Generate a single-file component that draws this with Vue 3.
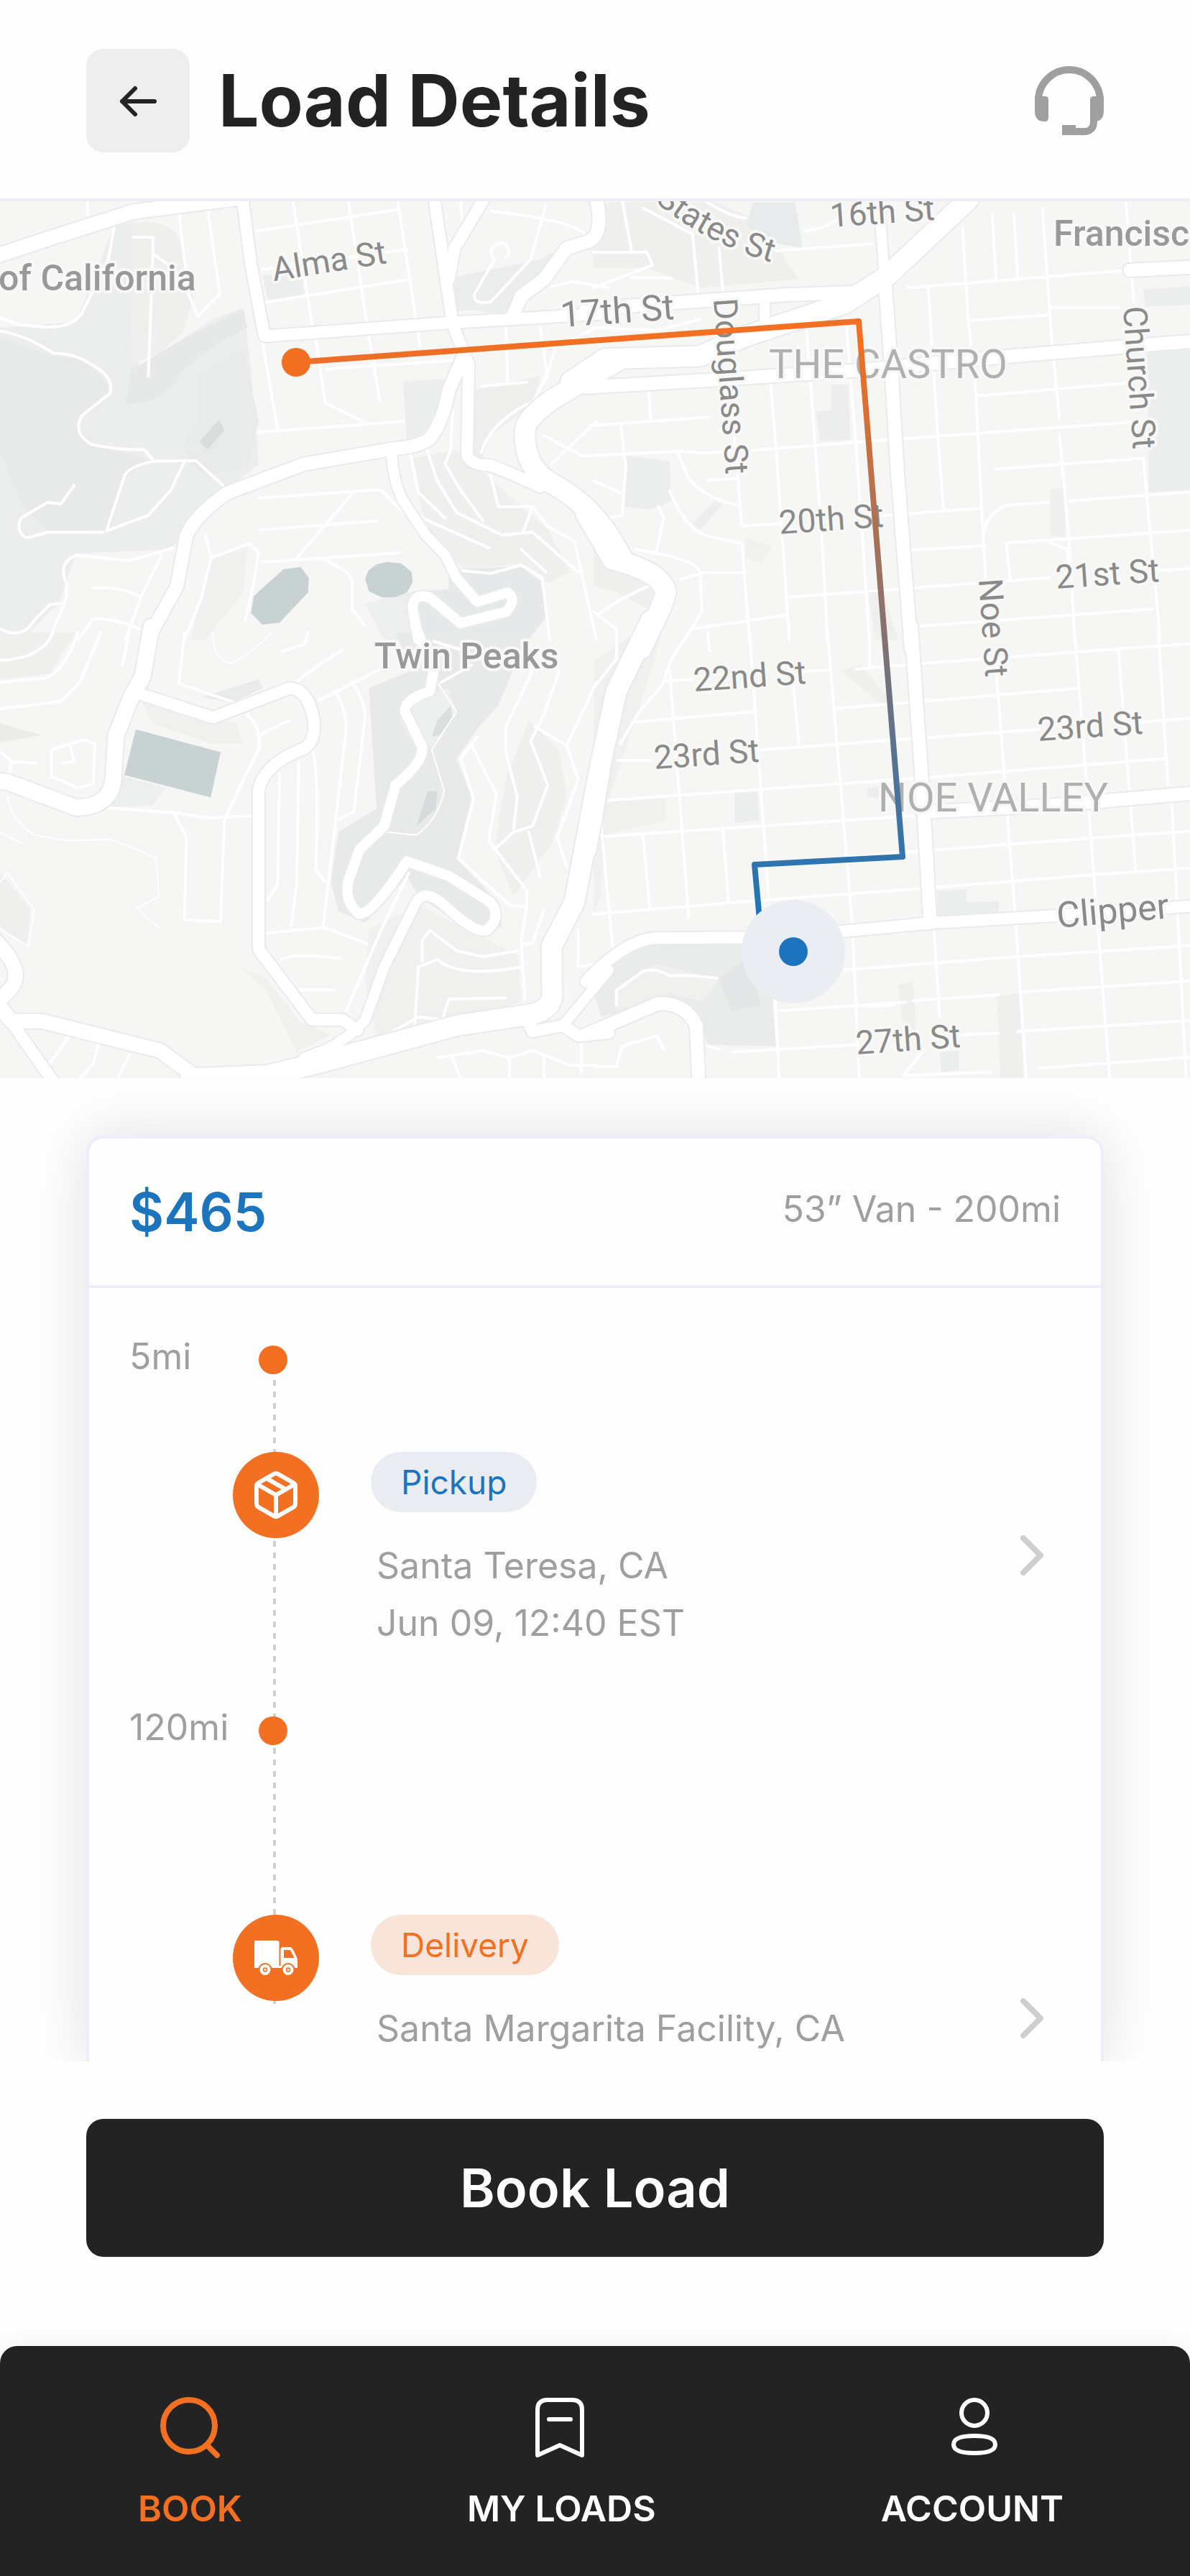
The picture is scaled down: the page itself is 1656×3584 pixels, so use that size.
<script setup>
const tiles = [
  {
    id: 'nw', x: 0, y: -10, height: 620,
    areas: [
      { c: '#ebeeed', d: 'M0 470L200 450L300 110L350 100L345 560L390 640L480 510L560 440L640 400L660 620L680 950L520 1120L450 1250L200 1265L155 1440L60 1568H0Z' },
      { c: '#e7eae9', d: 'M0 500Q80 560 200 580Q290 640 285 700L205 800Q210 870 300 900L400 940L320 1000L290 1180L130 1190L60 1100L0 900Z' },
      { c: '#e6e9e8', d: 'M345 620L480 510L640 405L650 470Q520 560 470 640Q430 740 330 740Z' },
      { c: '#e8ebea', d: 'M520 640L640 540L680 800L650 960L540 990Q440 900 520 800Z' },
      { c: '#dadddc', d: 'M525 870L575 795L590 830L545 900Z' },
      { c: '#efefed', d: 'M350 100Q440 90 470 150L510 370L480 490L420 560L345 600Z' },
      { c: '#ebeeed', d: 'M690 285L795 275L800 365L705 375Z' },
      { c: '#ebeeed', d: 'M1060 660L1180 650L1150 800L1070 880Z' },
      { c: '#ebedec', d: 'M1170 300L1420 230L1510 170L1440 300L1370 400L1300 420Q1230 400 1180 420Z' },
      { c: '#eeeeec', d: 'M1250 690L1420 640L1400 740L1290 850L1260 950L1240 900Z' },
      { c: '#efefed', d: 'M1080 930L1200 900L1330 1050L1440 1180L1500 1330L1440 1370L1370 1300L1220 1320L1120 1180Z' },
      { c: '#e6e9e9', d: 'M1180 1320L1370 1310L1430 1370L1440 1480L1390 1568H1110L1080 1400L1180 1390Z' },
      { c: '#ecefee', d: 'M960 1440L1080 1400L1100 1568H1010Z' },
      { c: '#f0f0ee', d: 'M560 1280L650 1240L640 1400L540 1568H500Z' },
      { c: '#c9d2d3', d: 'M745 1320L790 1312L812 1350L810 1402L735 1508L690 1515L660 1475L667 1415Z' },
      { c: '#c9d2d3', d: 'M990 1303L1020 1294L1055 1300L1082 1330L1085 1365L1070 1402L1040 1418L1005 1420L970 1398L960 1355L968 1325Z' },
    ],
    majors: [
      { w: 20, d: 'M-20 222L120 160L350 62L640 12' },
      { w: 16, d: 'M636 0L660 250L695 500L1190 452L1600 420' },
      { w: 16, d: 'M1140 0L1165 230L1190 458L1232 600L1228 920Q1240 955 1290 955Q1340 980 1420 1030' },
      { w: 16, d: 'M1280 0L1195 190L1180 300' },
      { w: 18, d: 'M1568 20Q1590 150 1540 170L1490 190L1430 300L1370 360L1350 425' },
      { w: 18, d: 'M1222 560L1180 690Q1165 800 1130 860Q1100 890 1040 895L800 950L600 1050Q520 1120 490 1200L465 1380L388 1568' },
      { w: 14, d: 'M1030 900Q1030 1000 1060 1080L1120 1200L1170 1270L1200 1350L1255 1435L1335 1402Q1360 1430 1330 1470L1210 1510L1130 1420Q1085 1400 1085 1460L1100 1568' },
      { w: 28, d: 'M1620 590L1480 700Q1390 770 1380 830Q1375 950 1440 1010Q1540 1080 1600 1200L1640 1290' },
    ],
    minors: [
      'M470 60L495 350L520 430L578 350L545 50', 'M350 152H402V210L455 260', 'M402 210L390 640',
      'M300 115L285 230L215 420Q190 470 120 468L50 460L-10 430', 'M230 30V80',
      'M-10 480Q60 490 140 560Q200 560 240 600Q300 640 290 700L215 780Q190 840 240 880Q300 900 380 900L405 940',
      'M405 940L515 938L590 1030', 'M405 940Q330 960 325 1000L280 1185L390 1130L450 1040L485 940',
      'M195 1025L160 1090L125 1085L55 1140Q40 1190 70 1210L125 1190H270',
      'M675 130L1045 55', 'M770 20L820 460', 'M915 20L965 460', 'M1045 20L1105 540', 'M690 265L1070 195', 'M700 380L1080 300',
      'M860 615L1200 585', 'M690 520L730 830', 'M680 838L1060 800', 'M830 510L855 735L955 800', 'M970 500L998 725',
      'M680 1070L1000 1040L1060 1120', 'M685 1182L990 1150', 'M930 1050L780 1280', 'M690 1295L1050 1262',
      'M850 1285Q925 1330 925 1360V1460L960 1520', 'M540 1200L555 1280L530 1420L485 1568',
      'M555 1280L655 1230L680 1260L665 1380L645 1500', 'M455 1245L340 1290L200 1270Q150 1300 175 1370V1420L130 1568',
      'M425 1270L370 1420L330 1568', 'M245 1385Q320 1380 365 1415', 'M205 1568L245 1495Q300 1490 365 1530', 'M0 1530Q60 1570 90 1500L130 1445L160 1440',
      'M1080 920L1100 1050L1170 1140', 'M1120 890L1150 1010L1200 1120L1320 1200L1400 1190L1520 1330',
      'M1190 760L1185 900L1170 950L1215 1050L1270 1150', 'M1110 1140L1285 1245',
      'M1290 990L1310 1100L1400 1100L1440 1170L1510 1220L1540 1400L1568 1568', 'M1400 1100L1375 1190',
      'M1215 1325L1290 1335L1370 1305L1425 1350L1445 1568', 'M1370 1250L1435 1330',
      'M1290 60Q1500 90 1545 145', 'M1435 40L1395 230L1290 380Q1240 390 1248 350L1300 230Q1275 190 1318 170Q1350 190 1330 225',
      'M1460 540Q1440 650 1400 730Q1290 800 1265 910', 'M1270 675L1385 662', 'M1330 470L1335 660', 'M1420 470L1440 650', 'M1460 540L1568 470',
      'M1430 850L1530 920H1568', 'M1450 950L1568 800', 'M1450 325L1510 308L1600 330', 'M1210 30L1215 90',
    ],
  },
  {
    id: 'ne', x: 826, y: -10, height: 620,
    areas: [
      { c: '#efefed', d: 'M0 30H330L440 100L540 300L280 330L140 260H0Z' },
      { c: '#e8ebeb', d: 'M420 30H530L550 190L470 170L400 110Z' },
      { c: '#eceeed', d: 'M80 920L200 940L205 1080L150 1110L80 1100Z' },
      { c: '#eceeed', d: 'M625 670H670L675 865L595 870L585 765L625 760Z' },
      { c: '#eceeed', d: 'M1455 550L1568 540V1040L1460 1050Z' },
      { c: '#eceeed', d: 'M1445 335L1568 325V390L1450 395Z' },
      { c: '#efefed', d: 'M1200 1040L1240 1030V1210L1200 1200Z' },
      { c: '#eceeed', d: 'M260 1160L320 1080L340 1090L280 1180Z' },
      { c: '#efefed', d: 'M0 1200L90 1300L170 1340V1480L60 1400L0 1380Z' },
      { c: '#efefed', d: 'M720 1390L760 1390L800 1568H740Z' },
      { c: '#f0f0ee', d: 'M400 1210L470 1240L440 1300L400 1280Z' },
    ],
    majors: [
      { w: 18, d: 'M-20 405L500 355L700 345' },
      { w: 14, d: 'M450 370V450' },
      { w: 18, d: 'M-20 680L300 655L700 620L1100 570L1600 515' },
      { w: 28, d: 'M-60 660L30 580L280 570L400 500L660 385L770 290L985 20' },
      { w: 14, d: 'M750 20L765 290' },
      { w: 18, d: 'M765 290L780 560L800 1000L835 1600' },
      { w: 18, d: 'M1410 268L1600 255' },
      { w: 28, d: 'M-20 1125L50 1285Q180 1330 190 1400Q185 1440 150 1530L125 1600' },
    ],
    minors: [
      'M970 120L985 440L1005 700L1020 1100L1040 1568', 'M880 330L905 850L920 1110', 'M1180 50L1205 520L1225 790', 'M1400 30L1420 380',
      'M1445 930L1490 1568', 'M1225 850L1250 1220L1265 1568', 'M560 480L600 1200L615 1568', 'M665 470L690 880L725 1568', 'M465 660L480 900L515 1568',
      'M370 860L390 1168L490 1160', 'M825 330L1390 270', 'M990 445L1200 425', 'M1205 400H1380', 'M1010 710L1400 665',
      'M-10 920L230 905L290 912L480 895L770 865L1440 800', 'M1055 968L1440 930', 'M1250 1080L1600 1045', 'M760 1132L1020 1105', 'M1085 1228L1600 1180',
      'M840 1252L1030 1238', 'M515 1418L800 1390L1200 1350', 'M1480 1325L1600 1315', 'M860 1520L1470 1460', 'M-10 815L300 785',
      'M1030 1180Q1030 1130 1085 1095L1195 1085', 'M1085 1230L1095 1350', 'M72 815L85 960L75 1130L40 1140', 'M145 700L150 790',
      'M220 905Q250 1000 250 1000Q290 1070 380 1095', 'M200 1045Q240 1170 290 1200L390 1230L410 1568', 'M300 1008L380 1000',
      'M110 1250L170 1265Q270 1290 280 1330L285 1470L240 1568', 'M230 1355L290 1332H400', 'M10 1480L80 1420L150 1375', 'M260 1530L510 1480',
      'M1048 70L1058 300', 'M1105 70L1115 290', 'M75 20L100 200', 'M0 205H140L155 250L0 330', 'M130 50L260 140L275 350', 'M330 190L340 350',
      'M480 200L730 175', 'M100 295H205', 'M555 130Q610 120 640 90', 'M300 30Q360 80 400 85', 'M170 1100L185 1140L165 1260', 'M0 1010L70 1050',
      'M1200 1225L1245 1250L1250 1300', 'M0 470L170 480L280 440', 'M0 1470L60 1530V1568',
    ],
  },
  {
    id: 'sw', x: 0, y: 600, height: 640,
    areas: [
      { c: '#efefed', d: 'M0 0H200L130 140L0 160Z' },
      { c: '#ebebe9', d: 'M0 310L110 350L0 375Z' },
      { c: '#e8eaea', d: 'M1040 0H1390L1310 250L1260 320L1200 430L1240 560L1200 770L1310 920L1320 1000L1270 1040L1170 960L1100 900L1070 830L960 990L890 950L870 850L890 680L990 600L980 400L970 190L1080 130Z' },
      { c: '#eef0ef', d: 'M1060 220L1180 190L1200 270L1130 400L1110 430L1050 300Z' },
      { c: '#dcdfdf', d: 'M1135 355L1150 300L1185 250L1190 300L1155 350Z' },
      { c: '#d8dbdb', d: 'M1095 660L1125 540H1150L1145 600Z' },
      { c: '#ecefee', d: 'M320 490L435 530L400 590L285 595Z' },
      { c: '#e9ebea', d: 'M530 220L680 160L690 190L610 240Z' },
      { c: '#f0f0ee', d: 'M370 230L620 310L640 380L560 380L400 310Z' },
      { c: '#f0f0ee', d: 'M630 1140L700 1180L790 1330L870 1370L780 1430L750 1350L700 1220Z' },
      { c: '#efefed', d: 'M1390 300L1470 400L1490 560L1450 720L1350 900L1300 740L1330 500Z' },
      { c: '#f0f0ee', d: 'M970 1010L1100 930L1360 1100L1370 1260L1200 1330L990 1380L960 1200Z' },
      { c: '#efefed', d: 'M0 820L80 940L70 1070L0 1000Z' },
      { c: '#c9d2d3', d: 'M357 330L580 408L554 562L327 486Z' },
    ],
    majors: [
      { w: 22, d: 'M398 -20L375 150L345 220L305 350L298 500Q290 595 200 597L20 510L-20 505' },
      { w: 16, d: 'M365 208L560 290L760 190Q810 190 825 300Q830 370 800 395Q690 450 680 540V1080L820 1320H900L940 1355' },
      { w: 14, d: 'M1092 -20L1140 130L1130 200Q1060 230 1065 270L1110 390Q1115 440 1040 520L1010 660L945 740L915 850Q905 920 945 960Q980 960 1070 780L1180 830L1290 920Q1320 970 1280 1015Q1250 1030 1160 920Q1110 870 1090 930L1010 1140L960 1320Q930 1370 860 1420L800 1450' },
      { w: 28, d: 'M1580 440L1510 920L1450 1070L1452 1240Q1445 1295 1380 1305L1200 1340L830 1470L700 1510L500 1520' },
      { w: 20, d: 'M520 1520L420 1425L250 1370L110 1325H30L-10 1260Q40 1210 40 1180Q50 1130 -20 1040' },
      { w: 16, d: 'M10 1290L80 1420L160 1568' },
      { w: 16, d: 'M1385 1320L1400 1360L1480 1340L1520 1375L1600 1365' },
      { w: 14, d: 'M1480 1340L1600 1150' },
    ],
    minors: [
      'M0 95Q110 90 140 0', 'M0 170L120 155Q170 130 205 0', 'M0 260L160 235L210 170L265 0', 'M340 0L322 110', 'M485 0L470 175L620 240',
      'M780 170Q800 140 900 60', 'M740 65L800 40L810 0', 'M840 230L1000 125', 'M925 170Q960 230 960 290L930 610L885 640', 'M880 200Q910 260 910 330L850 1000',
      'M820 400Q840 450 830 810L855 850', 'M785 440V500L780 860L765 1000', 'M735 480L730 860L705 910', 'M700 1025L850 1005L965 1060',
      'M1075 820L1000 1020L910 1290', 'M740 1115L765 1102Q840 1100 895 1112', 'M790 1218H880', 'M650 280Q690 330 680 400L640 500L590 640L580 985L485 980L490 700L455 610',
      'M680 350L760 300', 'M280 597L460 615L550 632L660 625', 'M135 400L220 365L250 380L245 515L205 530L135 490Z', 'M165 445L195 440L185 390', 'M5 410L30 440L95 445M30 440L25 480',
      'M1400 130L1330 320V410L1360 560L1350 670', 'M1470 130L1430 280L1395 370L1440 520L1400 660L1350 680L1300 740', 'M1405 320L1490 385L1520 500L1465 700L1490 800', 'M1490 385L1568 170',
      'M1255 355L1212 430L1245 570L1205 770L1340 930L1385 935L1370 1050L1380 1250', 'M1240 385L1305 550L1285 710L1385 880V935', 'M1390 680L1420 830',
      'M1110 1120V1050L1130 1015L1200 1085L1270 1105L1360 1085', 'M1090 1340L1100 1140L1150 1115Q1210 1180 1370 1140', 'M1165 1310L1180 1250L1330 1245', 'M1020 1370L1100 1310L1165 1320',
      'M1150 1450L1270 1425L1340 1450L1400 1425L1500 1475H1568', 'M1190 1450L1210 1520', 'M1340 1450V1520', 'M1430 1450V1520', 'M1528 1400V1500', 'M130 1470L180 1380', 'M210 1520L245 1470L260 1400', 'M310 1520L340 1440',
      'M1520 1015V1140L1568 1130', 'M1430 945L1400 1060H1370', 'M1140 30L1215 60', 'M1160 170L1240 110',
    ],
    paths: [
      'M20 560Q30 640 90 690L180 710L290 705L380 750L410 770L418 900L360 940L420 1010',
      'M0 680L60 720', 'M0 850L20 820L90 945L75 1070L0 1010', 'M560 0Q560 100 610 105Q660 70 715 0',
      'M1150 170L1200 270L1135 400L1168 540Q1150 640 1095 690L1015 680',
    ],
  },
  {
    id: 'se', x: 826, y: 600, height: 640,
    areas: [
      { c: '#f0f0ee', d: 'M0 100L110 0H180L120 260L40 570L190 560V640L30 690L20 900L0 950Z' },
      { c: '#eaecec', d: 'M90 1070L390 1055L410 1130L470 1250L480 1410L300 1405L270 1290L200 1250L20 1310L0 1220Z' },
      { c: '#f0f0ee', d: 'M60 1220L160 1130L330 1180L290 1260L200 1230L60 1290Z' },
      { c: '#e3e6e6', d: 'M330 1180L400 1110L440 1270L360 1290Z' },
      { c: '#eceeed', d: 'M370 545L430 540L435 640L372 650Z' },
      { c: '#eceeed', d: 'M905 880L980 875V920L1065 915V955L905 970Z' },
      { c: '#efefed', d: 'M650 130L700 110L790 240L760 250Z' },
      { c: '#efefed', d: 'M800 1200L840 1190L850 1380L820 1400Z' },
      { c: '#efefed', d: 'M1060 1240L1120 1230L1130 1520H1070Z' },
      { c: '#eceeed', d: 'M720 530L760 525V565L720 560Z' },
      { c: '#eceeed', d: 'M910 1430L960 1425V1490L915 1500Z' },
    ],
    majors: [
      { w: 28, d: 'M150 -40L60 200L20 440L-5 640L-20 740' },
      { w: 18, d: 'M835 -20L865 540L885 990' },
      { w: 18, d: 'M870 612L1200 590L1600 545' },
      { w: 16, d: 'M-20 1190Q80 1050 160 1042L390 1040L660 1018L890 990L1220 965L1600 930' },
      { w: 18, d: 'M-20 1370L170 1265Q240 1260 270 1340L278 1568' },
    ],
    minors: [
      'M200 130L250 970', 'M410 0L460 900', 'M300 0L305 60', 'M525 180L540 380', 'M615 0L680 990L700 1568', 'M725 0V120', 'M1060 150L1110 990L1140 1568', 'M1265 0L1360 1568', 'M1380 60L1425 810',
      'M1485 0L1510 520', 'M1520 580L1560 1568', 'M895 1020L910 1310', 'M20 660L50 1070', 'M130 690L148 940', 'M340 675L355 915', 'M475 1200L490 1568',
      'M690 125L870 105L1600 35', 'M190 165L260 160', 'M550 132L620 128', 'M640 258L860 235L1275 190', 'M110 305L420 270', 'M440 400L860 360L1170 330',
      'M1440 305L1600 290', 'M65 437L150 435', 'M40 572L440 535L840 498L1500 430', 'M30 695L430 660L840 625', 'M660 765L860 745L1420 690L1600 675', 'M0 960L420 915L860 873L1320 825L1600 800',
      'M660 1150L1110 1105L1600 1065', 'M485 1290L820 1260', 'M840 1255L1065 1235', 'M1130 1225L1600 1185', 'M1115 1360L1600 1320', 'M960 1372L1065 1365', 'M365 1430L690 1405', 'M1170 1485L1600 1445',
      'M820 1510L1045 1498', 'M60 1270V1220L130 1155Q160 1140 200 1170H260L325 1178', 'M70 380L120 270L180 180L205 90L250 0', 'M0 190L60 90V0', 'M0 1480H60L75 1410L165 1375L185 1420',
      'M870 1420L815 1510', 'M300 1410L330 1422', 'M710 1275L790 1270',
    ],
  },
]

const streets = [
  { t: 'Alma St', x: 381, y: 111, r: -9 },
  { t: '17th St', x: 781, y: 175, r: -4, big: true },
  { t: '16th St', x: 1156, y: 36, r: -4 },
  { t: 'Douglass St', x: 993, y: 136, r: 86 },
  { t: 'Church St', x: 1563, y: 147, r: 86 },
  { t: 'Noe St', x: 1362, y: 526, r: 86 },
  { t: '20th St', x: 1085, y: 463, r: -4 },
  { t: '21st St', x: 1470, y: 539, r: -4 },
  { t: '22nd St', x: 966, y: 682, r: -4 },
  { t: '23rd St', x: 911, y: 790, r: -4 },
  { t: '23rd St', x: 1445, y: 751, r: -4 },
  { t: 'Clipper', x: 1472, y: 1011, r: -5, big: true },
  { t: '27th St', x: 1192, y: 1187, r: -4 },
]

const legs = [
  { miles: '5mi', kind: 'pickup', label: 'Pickup', lines: ['Santa Teresa, CA', 'Jun 09, 12:40 EST'] },
  { miles: '120mi', kind: 'delivery', label: 'Delivery', lines: ['Santa Margarita Facility, CA'] },
]
</script>

<template>
  <div class="app">
    <header class="top">
      <button class="back" type="button" aria-label="Back">
        <svg width="60" height="60" viewBox="0 0 60 60" fill="none" stroke="#232323" stroke-width="6" stroke-linecap="round" stroke-linejoin="round"><path d="M53 31H8M26 13L8 31L26 49" /></svg>
      </button>
      <h1>Load Details</h1>
      <button class="support" type="button" aria-label="Support">
        <svg width="96" height="96" viewBox="0 0 96 96" fill="#9f9f9f">
          <path d="M5 50V48A43 43 0 0 1 91 48V50M82 72V77Q82 91 68 91H48" fill="none" stroke="#9f9f9f" stroke-width="10" />
          <path d="M0 42H14Q19 42 19 47V72Q19 77 14 77H13Q0 77 0 62Z" />
          <path d="M96 42H82Q77 42 77 47V77H83Q96 77 96 62Z" />
          <path d="M38 82H57V96H38Z" />
        </svg>
      </button>
    </header>

    <svg class="map" viewBox="0 0 1656 1220" role="img" aria-label="Route map">
      <defs>
        <linearGradient id="route" gradientUnits="userSpaceOnUse" x1="1195" y1="190" x2="1195" y2="990">
          <stop offset="0" stop-color="#f36f21" />
          <stop offset="1" stop-color="#1c75bc" />
        </linearGradient>
        <path id="states" d="M911 0Q990 66 1100 92" />
      </defs>
      <svg v-for="t in tiles" :key="'a' + t.id" class="tile" :x="t.x" :y="t.y" width="830" :height="t.height" viewBox="0 0 1568 1568" preserveAspectRatio="none">
        <path v-for="(a, i) in t.areas" :key="i" :d="a.d" :fill="a.c" />
      </svg>
      <svg v-for="t in tiles" :key="'m' + t.id" class="tile" :x="t.x" :y="t.y" width="830" :height="t.height" viewBox="0 0 1568 1568" preserveAspectRatio="none">
        <path v-for="(d, i) in t.paths" :key="'p' + i" class="road trail" :d="d" />
        <path v-for="(d, i) in t.minors" :key="i" class="road minor" :d="d" />
      </svg>
      <svg v-for="t in tiles" :key="'c' + t.id" class="tile" :x="t.x" :y="t.y" width="830" :height="t.height" viewBox="0 0 1568 1568" preserveAspectRatio="none">
        <path v-for="(m, i) in t.majors" :key="i" class="road casing" :d="m.d" :stroke-width="m.w + 4" />
      </svg>
      <svg v-for="t in tiles" :key="'r' + t.id" class="tile" :x="t.x" :y="t.y" width="830" :height="t.height" viewBox="0 0 1568 1568" preserveAspectRatio="none">
        <path v-for="(m, i) in t.majors" :key="i" class="road" :d="m.d" :stroke-width="m.w" />
      </svg>

      <g class="labels">
        <text v-for="(s, i) in streets" :key="i" class="street" :class="{ big: s.big }" :transform="`translate(${s.x} ${s.y}) rotate(${s.r})`">{{ s.t }}</text>
        <text class="street"><textPath href="#states">States St</textPath></text>
        <text class="place" x="-2" y="124">of California</text>
        <text class="place" x="1466" y="62">Francisco</text>
        <text class="place" x="521" y="650">Twin Peaks</text>
        <text class="district" x="1070" y="246">THE CASTRO</text>
        <text class="district" x="1222" y="849">NOE VALLEY</text>
      </g>

      <path d="M412 224L1195 167L1256 912L1050 923L1058 1010" fill="none" stroke="url(#route)" stroke-width="8" stroke-linejoin="round" />
      <circle cx="412" cy="224" r="20" fill="#f36f21" />
      <circle cx="1104" cy="1044" r="72" fill="#eaeef3" />
      <circle cx="1104" cy="1044" r="20" fill="#1c75bc" />
    </svg>

    <main class="content">
      <section class="card">
        <div class="summary">
          <strong class="price">$465</strong>
          <span class="haul">53” Van - 200mi</span>
        </div>
        <ol class="timeline">
          <li v-for="leg in legs" :key="leg.kind" class="leg">
            <div class="miles">
              <span class="distance">{{ leg.miles }}</span>
              <span class="dot"></span>
            </div>
            <div class="stop">
              <span class="badge">
                <svg v-if="leg.kind === 'pickup'" width="72" height="72" viewBox="0 0 24 24" fill="none" stroke="#fff" stroke-width="2" stroke-linecap="round" stroke-linejoin="round">
                  <path d="M16.5 9.4L7.5 4.21" />
                  <path d="M21 16V8a2 2 0 0 0-1-1.73l-7-4a2 2 0 0 0-2 0l-7 4A2 2 0 0 0 3 8v8a2 2 0 0 0 1 1.73l7 4a2 2 0 0 0 2 0l7-4A2 2 0 0 0 21 16z" />
                  <path d="M3.27 6.96L12 12.01l8.73-5.05M12 22.08V12" />
                </svg>
                <svg v-else width="60" height="48" viewBox="0 0 60 48">
                  <path fill="#fff" d="M0 0H32Q34.500 0 34.500 2.500V35H36.500V12Q36.500 9 39.500 9H49Q52 9 53.500 12L59 23Q60 25 60 28V38H0Z" />
                  <path fill="#f36f21" d="M41 13H48Q50 13 51 15L55.500 24H41Z" />
                  <g v-for="cx in [15, 47]" :key="cx">
                    <circle :cx="cx" cy="40.500" r="9.500" fill="#f36f21" />
                    <circle :cx="cx" cy="40.500" r="7.500" fill="#fff" />
                    <circle :cx="cx" cy="40.500" r="2.500" fill="#fff" stroke="#f36f21" stroke-width="1.500" />
                  </g>
                </svg>
              </span>
              <div class="info">
                <span class="tag" :class="leg.kind">{{ leg.label }}</span>
                <p v-for="line in leg.lines" :key="line">{{ line }}</p>
              </div>
              <button class="open" type="button" :aria-label="leg.label + ' details'">
                <svg width="32" height="56" viewBox="0 0 32 56" fill="none" stroke="#cfcfcf" stroke-width="8" stroke-linecap="round" stroke-linejoin="round"><path d="M4 4L28 28L4 52" /></svg>
              </button>
            </div>
          </li>
        </ol>
      </section>
    </main>

    <div class="action">
      <button class="book" type="button">Book Load</button>
    </div>

    <nav class="tabs">
      <a class="active" href="#book">
        <svg width="88" height="96" viewBox="0 0 88 96" fill="none" stroke="currentColor" stroke-width="8" stroke-linecap="round"><circle cx="43" cy="47" r="36" /><path d="M69 75L82 88" /></svg>
        <span>BOOK</span>
      </a>
      <a href="#loads">
        <svg width="88" height="96" viewBox="0 0 88 96" fill="none" stroke="currentColor" stroke-width="6" stroke-linecap="round" stroke-linejoin="round"><path d="M11 88V25Q11 11 25 11H59Q73 11 73 25V88L42 74Z M27 38H57" /></svg>
        <span>MY LOADS</span>
      </a>
      <a href="#account">
        <svg width="88" height="96" viewBox="0 0 88 96" fill="none" stroke="currentColor" stroke-width="6"><circle cx="47" cy="29" r="18" /><path d="M18 73C18 64 29 61 47 61S76 64 76 73S65 85 47 85S18 82 18 73Z" /></svg>
        <span>ACCOUNT</span>
      </a>
    </nav>
  </div>
</template>

<style>
body {
  margin: 0;
  background: #fefefe;
}
</style>

<style scoped>
.app {
  font-family: Inter, "Liberation Sans", sans-serif;
  font-size: 50px;
  color: #9f9f9f;
}
button {
  border: 0;
  padding: 0;
  background: none;
  font: inherit;
}
svg {
  display: block;
}
.top {
  display: flex;
  align-items: center;
  padding: 68px 120px 64px;
  border-bottom: 4px solid #eeedf9;
}
.back {
  display: grid;
  place-items: center;
  width: 144px;
  height: 144px;
  border-radius: 24px;
  background: #eeeeee;
}
h1 {
  flex: 1;
  margin: 0 0 0 40px;
  font-size: 100px;
  line-height: 120px;
  font-weight: 700;
  color: #232323;
}
.map {
  width: 100%;
  height: auto;
  background: #f6f6f4;
}
.tile {
  overflow: visible;
}
.road {
  fill: none;
  stroke: #fff;
  stroke-linecap: round;
  stroke-linejoin: round;
  vector-effect: non-scaling-stroke;
}
.minor {
  stroke-width: 4px;
}
.trail {
  stroke-width: 2px;
}
.casing {
  stroke: #e7ecea;
}
.labels {
  font-family: Roboto, "Liberation Sans", sans-serif;
  paint-order: stroke;
  stroke: #f8f8f6;
  stroke-width: 8px;
  stroke-linejoin: round;
}
.street {
  font-size: 46px;
  fill: #8a8a8a;
}
.big {
  font-size: 50px;
}
.place {
  font-size: 50px;
  font-weight: 500;
  fill: #999999;
}
.district {
  font-size: 56px;
  fill: #b0b0b0;
}
.content {
  overflow: hidden;
  padding: 80px 120px 0;
}
.card {
  border: 4px solid #eeedf9;
  border-bottom: 0;
  border-radius: 24px 24px 0 0;
  background: #fefefe;
  box-shadow: 0 0 80px rgba(0, 0, 0, 0.12);
}
.summary {
  display: flex;
  align-items: center;
  justify-content: space-between;
  height: 204px;
  padding: 0 56px;
  border-bottom: 4px solid #eeedf9;
}
.price {
  font-size: 74px;
  font-weight: 600;
  color: #1c75bc;
}
.haul {
  margin-bottom: 8px;
}
.timeline {
  position: relative;
  margin: 0;
  padding: 80px 80px 6px 56px;
  list-style: none;
}
.timeline::before {
  content: "";
  position: absolute;
  top: 96px;
  bottom: 80px;
  left: 256px;
  width: 4px;
  background: repeating-linear-gradient(#d1d1d1 0 8px, transparent 8px 16px);
}
.leg {
  position: relative;
}
.leg + .leg {
  margin-top: 90px;
}
.miles {
  display: flex;
  height: 40px;
  margin-bottom: 108px;
}
.leg + .leg .miles {
  margin-bottom: 236px;
}
.distance {
  width: 180px;
  line-height: 30px;
}
.dot {
  width: 40px;
  height: 40px;
  border-radius: 50%;
  background: #f36f21;
}
.stop {
  display: flex;
  align-items: flex-start;
  padding-left: 144px;
}
.badge {
  display: grid;
  place-items: center;
  width: 120px;
  height: 120px;
  margin-right: 72px;
  border-radius: 50%;
  background: #f36f21;
}
.info {
  flex: 1;
}
.tag {
  display: block;
  width: fit-content;
  margin-bottom: 34px;
  padding: 0 42px;
  border-radius: 42px;
  font-size: 46px;
  line-height: 84px;
}
.pickup {
  background: #e9edf2;
  color: #1c75bc;
}
.delivery {
  background: #f9e4da;
  color: #f36f21;
}
p {
  margin: 0 0 0 8px;
  line-height: 80px;
}
.open {
  margin-top: 116px;
}
.action {
  padding: 80px 120px 124px;
}
.book {
  width: 100%;
  height: 192px;
  border-radius: 24px;
  background: #232323;
  color: #fff;
  font-size: 74px;
  font-weight: 600;
}
.tabs {
  display: flex;
  justify-content: space-between;
  padding: 64px 176px 64px 192px;
  border-radius: 24px 24px 0 0;
  background: #232323;
  box-shadow: 0 0 40px rgba(0, 0, 0, 0.06);
}
.tabs a {
  display: flex;
  flex-direction: column;
  align-items: center;
  gap: 36px;
  color: #fff;
  font-weight: 600;
  line-height: 60px;
  text-decoration: none;
}
.tabs .active {
  color: #f36f21;
}
</style>
